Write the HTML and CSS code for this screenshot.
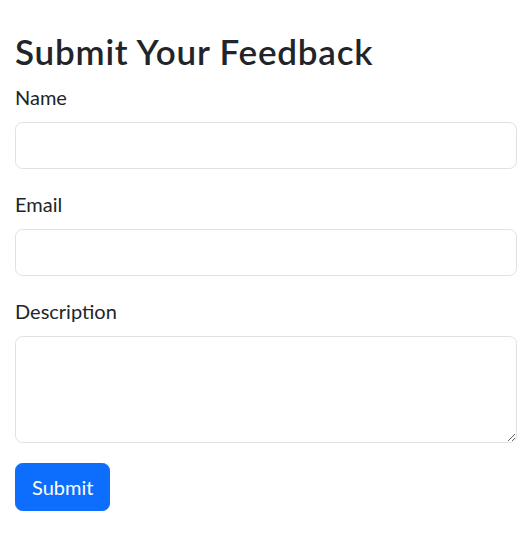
FILE: index.html
```html
<!DOCTYPE html>
<html lang="en">
<head>
<meta charset="utf-8">
<title>Submit Your Feedback</title>
<link rel="stylesheet" href="styles.css">
</head>
<body>
<div class="container">
  <h1 class="title">Submit Your Feedback</h1>
  <form class="form">
    <div class="field">
      <label class="label" for="name">Name</label>
      <input class="control" id="name" type="text">
    </div>
    <div class="field">
      <label class="label" for="email">Email</label>
      <input class="control" id="email" type="email">
    </div>
    <div class="field">
      <label class="label" for="desc">Description</label>
      <textarea class="control area" id="desc" rows="3"></textarea>
    </div>
    <button class="btn" type="button">Submit</button>
  </form>
</div>
</body>
</html>
```
FILE: styles.css
```css
* { box-sizing: border-box; }
body {
  margin: 0;
  font-family: Lato, "Noto Sans", sans-serif;
  font-size: 20px;
  line-height: 1.5;
  color: #212529;
  background: #fff;
}
.container {
  padding: 30px 10px 0 15px;
}
.title {
  margin: 0 0 10px;
  font-size: 35px;
  font-weight: 600;
  line-height: 1.2;
  letter-spacing: 0.8px;
}
.field {
  display: flex;
  flex-direction: column;
  margin-bottom: 20px;
}
.label {
  margin-bottom: 10px;
}
.control {
  display: block;
  width: 100%;
  height: 47px;
  padding: 7.5px 15px;
  font: inherit;
  color: #212529;
  background: #fff;
  border: 1px solid #dee2e6;
  border-radius: 7.5px;
}
.area {
  height: 107px;
  resize: vertical;
}
.btn {
  display: inline-block;
  height: 47.5px;
  padding: 7.5px 16px;
  font: inherit;
  color: #fff;
  background: #0d6efd;
  border: 1px solid #0d6efd;
  border-radius: 7.5px;
}
```
